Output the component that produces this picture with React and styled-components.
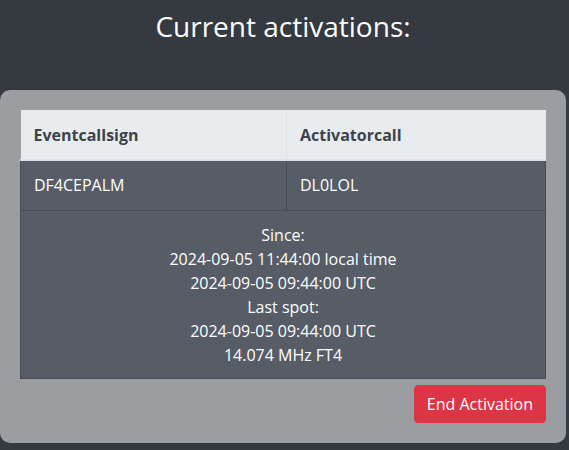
import React from 'react';
import styled, { createGlobalStyle } from 'styled-components';

const GlobalStyle = createGlobalStyle`
  html, body {
    margin: 0;
    padding: 0;
    background: #343a40;
  }
  body {
    font-family: 'Open Sans', 'Noto Sans', sans-serif;
    font-size: 16px;
    line-height: 24px;
    color: #ffffff;
  }
`;

const activation = {
  eventcallsign: 'DF4CEPALM',
  activatorcall: 'DL0LOL',
  sinceLocal: '2024-09-05 11:44:00 local time',
  sinceUtc: '2024-09-05 09:44:00 UTC',
  lastSpot: '2024-09-05 09:44:00 UTC',
  frequency: '14.074 MHz FT4',
};

export default function App() {
  return (
    <>
      <GlobalStyle />
      <Page>
        <Title>Current activations:</Title>
        <Card>
          <Table>
            <colgroup>
              <col style={{ width: '266px' }} />
              <col />
            </colgroup>
            <thead>
              <tr>
                <HeadCell>Eventcallsign</HeadCell>
                <HeadCell>Activatorcall</HeadCell>
              </tr>
            </thead>
            <tbody>
              <tr>
                <Cell>{activation.eventcallsign}</Cell>
                <Cell>{activation.activatorcall}</Cell>
              </tr>
              <tr>
                <DetailCell colSpan={2}>
                  <div>Since:</div>
                  <div>{activation.sinceLocal}</div>
                  <div>{activation.sinceUtc}</div>
                  <div>Last spot:</div>
                  <div>{activation.lastSpot}</div>
                  <div>{activation.frequency}</div>
                </DetailCell>
              </tr>
            </tbody>
          </Table>
          <Actions>
            <DangerButton>End Activation</DangerButton>
          </Actions>
        </Card>
      </Page>
    </>
  );
}

const Page = styled.div`
  display: flex;
  flex-direction: column;
  width: 566px;
`;

const Title = styled.h2`
  margin: 0;
  padding-top: 8px;
  height: 90px;
  box-sizing: border-box;
  text-align: center;
  font-size: 28px;
  line-height: 36px;
  font-weight: 400;
  color: #ffffff;
`;

const Card = styled.div`
  background: #9a9ea1;
  border-radius: 10px;
  padding: 20px;
  display: flex;
  flex-direction: column;
`;

const Table = styled.table`
  width: 100%;
  border-collapse: collapse;
  table-layout: fixed;
`;

const HeadCell = styled.th`
  background: #e9ecef;
  color: #3d434a;
  font-weight: 700;
  text-align: left;
  padding: 12px 13px;
  height: 50px;
  box-sizing: border-box;
  border-left: 1px solid #dee2e6;
  border-bottom: 2px solid #dee2e6;
  &:first-child {
    border-left: none;
  }
`;

const Cell = styled.td`
  background: #565d66;
  color: #ffffff;
  padding: 12px 13px;
  height: 50px;
  box-sizing: border-box;
  border: 1px solid #474d55;
`;

const DetailCell = styled.td`
  background: #565d66;
  color: #ffffff;
  text-align: center;
  padding: 12px 12px 11px;
  border: 1px solid #474d55;
`;

const Actions = styled.div`
  display: flex;
  justify-content: flex-end;
  padding-top: 6px;
`;

const DangerButton = styled.button`
  font-family: inherit;
  font-size: 16px;
  line-height: 24px;
  color: #ffffff;
  background: #dc3545;
  border: 1px solid #dc3545;
  border-radius: 4px;
  padding: 6px 12px;
  cursor: pointer;
`;
